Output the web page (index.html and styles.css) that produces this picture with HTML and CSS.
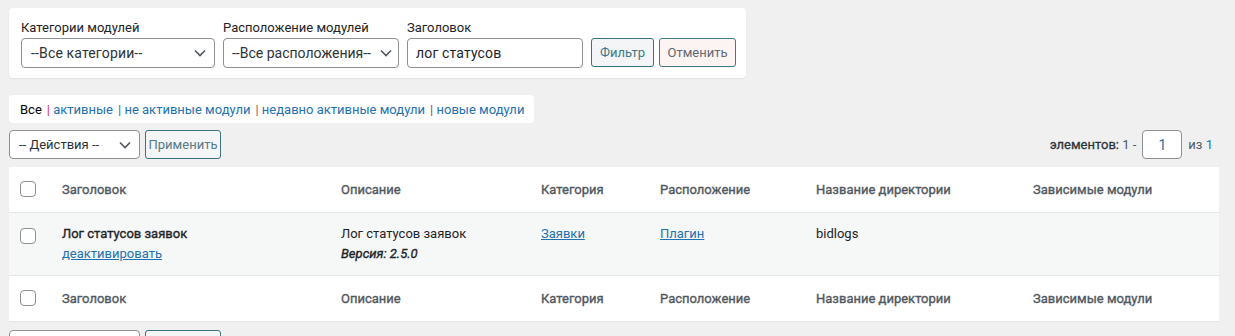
FILE: index.html
```html
<!DOCTYPE html>
<html lang="ru">
<head>
<meta charset="utf-8">
<link rel="stylesheet" href="styles.css">
</head>
<body>
<div class="wrap">
  <form class="filter">
    <div class="field">
      <label class="lbl">Категории модулей</label>
      <div class="select w194"><span>--Все категории--</span><svg class="chev" width="12" height="8" viewBox="0 0 12 8"><path d="M1 1.5l5 5 5-5" fill="none" stroke="#50575e" stroke-width="1.6"/></svg></div>
    </div>
    <div class="field">
      <label class="lbl">Расположение модулей</label>
      <div class="select w176 tight"><span>--Все расположения--</span><svg class="chev" width="12" height="8" viewBox="0 0 12 8"><path d="M1 1.5l5 5 5-5" fill="none" stroke="#50575e" stroke-width="1.6"/></svg></div>
    </div>
    <div class="field">
      <label class="lbl">Заголовок</label>
      <div class="input w176">лог статусов</div>
    </div>
    <div class="btns">
      <span class="btn btn-filter">Фильтр</span>
      <span class="btn btn-cancel">Отменить</span>
    </div>
  </form>

  <ul class="views">
    <li class="cur">Все</li>
    <li><i class="sep s1">|</i> <a>активные</a></li>
    <li><i class="sep s2">|</i> <a>не активные модули</a></li>
    <li><i class="sep s3">|</i> <a>недавно активные модули</a></li>
    <li><i class="sep s4">|</i> <a>новые модули</a></li>
  </ul>

  <div class="tablenav">
    <div class="actions">
      <div class="select w131 sm"><span>-- Действия --</span><svg class="chev" width="12" height="8" viewBox="0 0 12 8"><path d="M1 1.5l5 5 5-5" fill="none" stroke="#50575e" stroke-width="1.6"/></svg></div>
      <span class="btn btn-apply">Применить</span>
    </div>
    <div class="pages">
      <span><b>элементов:</b> 1 -</span>
      <span class="pageinput">1</span>
      <span>из <a>1</a></span>
    </div>
  </div>

  <table class="list">
    <colgroup>
      <col class="c-cb"><col class="c-title"><col class="c-desc"><col class="c-cat"><col class="c-place"><col class="c-dir"><col class="c-deps">
    </colgroup>
    <thead>
      <tr><th><span class="cb"></span></th><th>Заголовок</th><th>Описание</th><th>Категория</th><th>Расположение</th><th>Название директории</th><th>Зависимые модули</th></tr>
    </thead>
    <tbody>
      <tr>
        <td><span class="cb"></span></td>
        <td><strong>Лог статусов заявок</strong><a class="under block">деактивировать</a></td>
        <td>Лог статусов заявок<em class="ver">Версия: 2.5.0</em></td>
        <td><a class="under">Заявки</a></td>
        <td><a class="under">Плагин</a></td>
        <td>bidlogs</td>
        <td></td>
      </tr>
    </tbody>
    <tfoot>
      <tr><th><span class="cb"></span></th><th>Заголовок</th><th>Описание</th><th>Категория</th><th>Расположение</th><th>Название директории</th><th>Зависимые модули</th></tr>
    </tfoot>
  </table>

  <div class="tablenav bottom">
    <div class="actions">
      <div class="select w131 sm"></div>
      <span class="btn btn-apply"></span>
    </div>
  </div>
</div>
</body>
</html>
```

FILE: styles.css
```css
* { box-sizing: border-box; }
html, body { margin: 0; padding: 0; }
body {
  background: #f0f0f1;
  font-family: Roboto, "Liberation Sans", sans-serif;
  font-size: 13px;
  color: #1d2327;
  overflow: hidden;
}
.wrap { padding: 8px 16px 0 9px; }

.filter {
  display: inline-flex;
  align-items: flex-end;
  gap: 8px;
  background: #fff;
  border-radius: 4px;
  box-shadow: 0 1px 2px rgba(0,0,0,0.06);
  padding: 12px 10px 10px 12px;
  margin: 0;
}
.field { display: flex; flex-direction: column; }
.lbl { display: block; height: 18px; line-height: 16px; font-size: 13px; color: #1d2327; }
.select, .input {
  height: 30px;
  border: 1px solid #8c8f94;
  border-radius: 4px;
  background: #fff;
  font-size: 14px;
  color: #2c3338;
  display: flex;
  align-items: center;
  justify-content: space-between;
  padding: 0 8px 0 9px;
  white-space: nowrap;
  overflow: hidden;
  letter-spacing: 0.15px;
}
.select.tight { padding: 0 6px 0 8px; letter-spacing: 0; }
.input { padding-left: 8px; color: #1d2327; }
.select.sm { height: 29px; font-size: 13px; padding-left: 9px; letter-spacing: 0; }
.w194 { width: 194px; }
.w176 { width: 176px; }
.w131 { width: 131px; }
.chev { flex: none; margin-left: 2px; }
.btns { display: flex; gap: 5px; padding-bottom: 1px; }
.btn {
  display: inline-flex; align-items: center; justify-content: center;
  height: 29px;
  border: 1px solid #3a737d;
  border-radius: 3px;
  font-size: 13px;
  color: #50737a;
  padding: 0 6px;
}
.btn-filter { width: 63px; background: #f3f5f6; color: #3e7a86; }
.btn-cancel { width: 77px; background: #fcf3f3; color: #646970; border-color: #417a82; }
.btn-apply { width: 76px; height: 29px; background: #f3f5f6; color: #557a82; }

.views {
  list-style: none;
  display: inline-flex;
  margin: 17px 0 0;
  padding: 0 10px 0 11px;
  height: 28px;
  align-items: center;
  background: #fff;
  border-radius: 4px;
  font-size: 13px;
  gap: 5px;
}
.views li { white-space: nowrap; }
.views .cur { color: #000; }
.views a { color: #2271b1; }
.sep { font-style: normal; }
.s1 { color: #d63638; }
.s2 { color: #2271b1; }
.s3 { color: #b0505a; }
.s4 { color: #8a3a8f; }

.tablenav {
  display: flex;
  justify-content: space-between;
  align-items: center;
  margin-top: 7px;
  height: 29px;
}
.actions { display: flex; gap: 5px; align-items: center; }
.pages { display: flex; align-items: center; gap: 6px; color: #50575e; padding-right: 6px; }
.pages b { font-weight: 400; -webkit-text-stroke: 0.3px currentColor; color: #2c3338; }
.pages a { color: #2271b1; }
.pageinput {
  width: 40px; height: 29px;
  border: 1px solid #8c8f94; border-radius: 4px;
  background: #fff;
  display: inline-flex; align-items: center; justify-content: center;
  color: #2271b1; font-size: 14px;
}

.list {
  width: 100%;
  margin-top: 8px;
  border-collapse: collapse;
  table-layout: fixed;
  background: #fff;
  box-shadow: 0 1px 1px rgba(0,0,0,0.04);
}
.c-cb { width: 43px; }
.c-title { width: 279px; }
.c-desc { width: 200px; }
.c-cat { width: 119px; }
.c-place { width: 156px; }
.c-dir { width: 217px; }
.c-deps { width: auto; }
.list th {
  text-align: left;
  font-weight: 400;
  -webkit-text-stroke: 0.35px currentColor;
  color: #50575e;
  font-size: 13px;
  padding: 0 10px;
  height: 45px;
  vertical-align: middle;
}
.list tfoot th { height: 46px; }
.list th:first-child, .list td:first-child { padding: 0 0 0 11px; }
.list thead tr { border-bottom: 1px solid #e6e7e8; }
.list tfoot tr { border-top: 1px solid #e6e7e8; }
.list tbody tr { background: #f6f7f7; height: 63px; }
.list td {
  vertical-align: top;
  padding: 11px 10px 0;
  line-height: 19px;
  color: #1d2327;
}
.list td:first-child { padding-top: 15px; }
.cb {
  display: block;
  width: 16px; height: 16px;
  border: 1px solid #8c8f94;
  border-radius: 4px;
  background: #fff;
}
.list td strong { display: block; font-weight: 400; -webkit-text-stroke: 0.35px currentColor; color: #1d2327; }
.list td strong + a { margin-top: 1px; }
.block { display: block; }
.under { color: #2271b1; text-decoration: underline; }
.ver { display: block; font-weight: 400; -webkit-text-stroke: 0.35px currentColor; margin-top: 1px; }

.bottom { margin-top: 9px; }
```
